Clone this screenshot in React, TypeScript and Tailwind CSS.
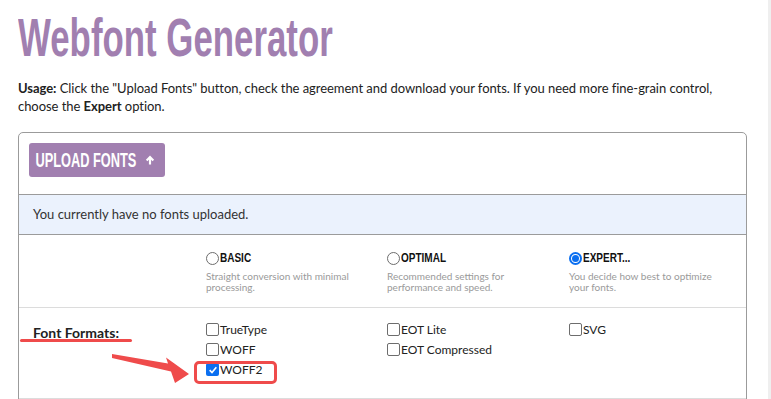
const body = "font-['Lato','Liberation_Sans',sans-serif]";
const cond = "font-['Liberation_Sans',sans-serif]";

type Opt = { title: string; desc: string; checked?: boolean };

const options: Opt[] = [
  { title: "BASIC", desc: "Straight conversion with minimal processing." },
  { title: "OPTIMAL", desc: "Recommended settings for performance and speed." },
  { title: "EXPERT...", desc: "You decide how best to optimize your fonts.", checked: true },
];

function Radio({ checked }: { checked?: boolean }) {
  if (checked)
    return (
      <span className="grid place-items-center h-[13px] w-[13px] rounded-full border-2 border-[#0b6ff0] shrink-0">
        <span className="h-[7px] w-[7px] rounded-full bg-[#0b6ff0]" />
      </span>
    );
  return <span className="h-[13px] w-[13px] rounded-full border border-[#6d6d6d] bg-white shrink-0" />;
}

function Check({ label, checked }: { label: string; checked?: boolean }) {
  return (
    <div className="flex items-center h-[20px]">
      {checked ? (
        <span className="grid place-items-center h-[13px] w-[13px] rounded-[2px] bg-[#0b6ff0] shrink-0">
          <svg viewBox="0 0 12 12" className="h-[10px] w-[10px]">
            <path d="M2 6.2 4.8 9 10 2.8" fill="none" stroke="white" strokeWidth="2" />
          </svg>
        </span>
      ) : (
        <span className="h-[13px] w-[13px] rounded-[2px] border border-[#6d6d6d] bg-white shrink-0" />
      )}
      <span className="ml-[1px] text-[12px] text-[#222]">{label}</span>
    </div>
  );
}

export default function App() {
  return (
    <div className={`flex h-screen overflow-hidden bg-white ${body}`}>
      <div className="flex-1 pl-[18px] pr-[21px]">
        <h1 className={`${cond} font-bold text-[#a17fb0] text-[54px] leading-none pt-[10px] whitespace-nowrap`}>
          <span className="inline-block origin-left scale-x-[0.645]">Webfont Generator</span>
        </h1>
        <p className="mt-[15px] text-[13px] leading-[18px] text-[#222] tracking-[-0.05px]">
          <span className="whitespace-nowrap">
            <b>Usage:</b> Click the "Upload Fonts" button, check the agreement and download your fonts. If you need more fine-grain control,
          </span>
          <br />
          choose the <b>Expert</b> option.
        </p>

        <div className="mt-[17px] border border-[#9b9b9b] rounded-t-[5px]">
          <div className="h-[61px] px-[10px] pt-[10px]">
            <button className={`${cond} relative h-[34px] w-[136px] rounded-[3px] bg-[#a17fb0] text-white font-bold text-[20px] text-left whitespace-nowrap`}>
              <span className="inline-block pl-[10px] origin-left scale-x-[0.64]">UPLOAD FONTS</span>
              <svg viewBox="0 0 12 12" className="absolute left-[116px] top-[12px] h-[10px] w-[10px]">
                <path d="M6 11.5V3M2 6.5 6 2.5l4 4" fill="none" stroke="white" strokeWidth="2.6" />
              </svg>
            </button>
          </div>

          <div className="h-[41px] flex items-center pl-[14px] bg-[#ebf2fd] border-y border-[#9b9b9b] text-[13px] text-[#333]">
            You currently have no fonts uploaded.
          </div>

          <div className="grid grid-cols-[187px_181px_182px_1fr] pt-[14px] pb-[14px] border-b border-[#dcdcdc]">
            <div />
            {options.map((o) => (
              <div key={o.title}>
                <div className="flex items-center gap-[1px] whitespace-nowrap">
                  <Radio checked={o.checked} />
                  <span className={`${cond} inline-block origin-left scale-x-[0.8] font-bold text-[12.5px] text-[#111]`}>{o.title}</span>
                </div>
                <p className="mt-[3px] pr-[20px] text-[10px] leading-[11px] text-[#9a9a9a]">{o.desc}</p>
              </div>
            ))}
          </div>

          <div className="relative grid grid-cols-[187px_181px_182px_1fr] pt-[12px] pb-[18px] border-b border-[#dcdcdc]">
            <div className="pl-[14px]">
              <span className="font-bold text-[14px] text-[#222]">Font Formats:</span>
            </div>
            <div>
              <Check label="TrueType" />
              <Check label="WOFF" />
              <div className="relative">
                <Check label="WOFF2" checked />
                <span className="absolute -left-[12px] top-[1px] w-[83px] h-[23px] rounded-[5px] border-[3px] border-[#ef4b4b]" />
              </div>
            </div>
            <div>
              <Check label="EOT Lite" />
              <Check label="EOT Compressed" />
            </div>
            <div>
              <Check label="SVG" />
            </div>

            <span className="absolute left-[1px] top-[31px] w-[112px] h-[3px] rounded-full bg-[#ef4b4b]" />
            <svg className="absolute left-[90px] top-[44px]" width="84" height="34" viewBox="0 0 84 34">
              <path d="M3 2 L59 11.5 L57 5.5 L80 22 L66 31 L62 19.5 L3 6 Z" fill="#ef4b4b" />
            </svg>
          </div>
        </div>
      </div>
      <div className="w-[3px] bg-[#efefef]" />
    </div>
  );
}
